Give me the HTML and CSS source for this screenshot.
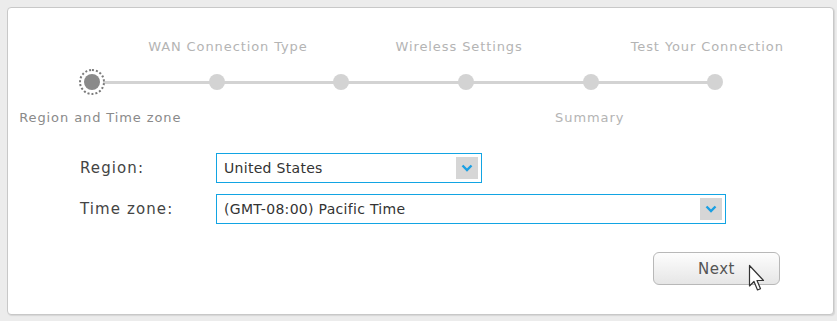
FILE: index.html
```html
<!DOCTYPE html>
<html>
<head>
<meta charset="utf-8">
<link rel="stylesheet" href="styles.css">
</head>
<body>
<div class="card">
  <div class="steps">
    <div class="step">
      <div class="lbl top"></div>
      <div class="dotrow"><span class="dot active"></span></div>
      <div class="lbl bottom current s1">Region and Time zone</div>
    </div>
    <div class="step">
      <div class="lbl top s2">WAN Connection Type</div>
      <div class="dotrow"><span class="dot"></span></div>
      <div class="lbl bottom"></div>
    </div>
    <div class="step">
      <div class="lbl top"></div>
      <div class="dotrow"><span class="dot"></span></div>
      <div class="lbl bottom"></div>
    </div>
    <div class="step">
      <div class="lbl top s4">Wireless Settings</div>
      <div class="dotrow"><span class="dot"></span></div>
      <div class="lbl bottom"></div>
    </div>
    <div class="step">
      <div class="lbl top"></div>
      <div class="dotrow"><span class="dot"></span></div>
      <div class="lbl bottom s5">Summary</div>
    </div>
    <div class="step">
      <div class="lbl top s6">Test Your Connection</div>
      <div class="dotrow"><span class="dot"></span></div>
      <div class="lbl bottom"></div>
    </div>
  </div>

  <div class="form">
    <div class="row">
      <label class="flabel">Region:</label>
      <div class="select region">
        <span class="value">United States</span>
        <span class="arrow"><svg width="12" height="8" viewBox="0 0 12 8"><path d="M1.5 1.5 L6 6 L10.5 1.5" fill="none" stroke="#1a9fe3" stroke-width="2.4"/></svg></span>
      </div>
    </div>
    <div class="row">
      <label class="flabel">Time zone:</label>
      <div class="select tz">
        <span class="value">(GMT-08:00) Pacific Time</span>
        <span class="arrow"><svg width="12" height="8" viewBox="0 0 12 8"><path d="M1.5 1.5 L6 6 L10.5 1.5" fill="none" stroke="#1a9fe3" stroke-width="2.4"/></svg></span>
      </div>
    </div>
  </div>

  <div class="actions">
    <button class="btn">Next</button>
    <svg class="cursor" width="20" height="30" viewBox="0 0 20 30"><path d="M1.5 1.5 L1.5 22 L6 17.5 L9.5 26 L12.5 24.7 L9 16.5 L15.5 16.5 Z" fill="#fff" stroke="#333" stroke-width="1.2" stroke-linejoin="round"/></svg>
  </div>
</div>
</body>
</html>
```
FILE: styles.css
```css
html, body { margin: 0; padding: 0; }
body {
  background: #ececec;
  padding: 7px 0 0 7px;
  font-family: "DejaVu Sans", Verdana, sans-serif;
  width: 837px;
  height: 321px;
  box-sizing: border-box;
  overflow: hidden;
}
.card {
  position: relative;
  width: 827px;
  height: 308px;
  box-sizing: border-box;
  background: #fff;
  border: 1px solid #c8c8c8;
  border-radius: 4px;
  box-shadow: 1px 1px 1px #d6d6d6;
  padding: 30px 0 0 22px;
}
.steps {
  display: grid;
  grid-template-columns: repeat(6, 124.6px);
  position: relative;
}
.steps::before {
  content: "";
  position: absolute;
  left: 62px;
  width: 623px;
  top: 43px;
  height: 3px;
  background: #d3d3d3;
}
.step {
  display: flex;
  flex-direction: column;
  align-items: center;
}
.lbl {
  height: 18px;
  line-height: 18px;
  font-size: 13px;
  letter-spacing: 0.9px;
  color: #b4b4b4;
  white-space: nowrap;
  position: relative;
}
.lbl.current { color: #8a8a8a; }
.lbl.s1 { left: 8px; }
.lbl.s2 { left: 11px; }
.lbl.s4 { left: -7px; }
.lbl.s5 { left: -1px; }
.lbl.s6 { left: -8px; }
.dotrow {
  height: 28px;
  margin: 12px 0 13px;
  display: flex;
  align-items: center;
  justify-content: center;
  position: relative;
  z-index: 1;
}
.dot {
  width: 16px;
  height: 16px;
  border-radius: 50%;
  background: #d3d3d3;
  display: block;
}
.dot.active {
  background: #8a8a8a;
  box-shadow: 0 0 0 3px #fff;
  outline: 2px dotted #7a7a7a;
  outline-offset: 3px;
  border-radius: 50%;
}
.form {
  margin-top: 26px;
  padding-left: 50px;
  display: flex;
  flex-direction: column;
  gap: 11px;
}
.row {
  display: flex;
  align-items: center;
}
.flabel {
  width: 136px;
  font-size: 15px;
  letter-spacing: 1.1px;
  color: #444;
}
.select {
  height: 30px;
  box-sizing: border-box;
  border: 1px solid #12a4e3;
  display: flex;
  align-items: center;
  justify-content: space-between;
  padding: 0 3px 0 7px;
}
.select.region { width: 266px; }
.select.tz { width: 510px; }
.value {
  font-size: 14px;
  letter-spacing: 0.3px;
  color: #333;
}
.arrow {
  width: 22px;
  height: 22px;
  background: #d6d6d6;
  display: flex;
  align-items: center;
  justify-content: center;
}
.actions {
  margin-top: 28px;
  display: flex;
  justify-content: flex-end;
  padding-right: 53px;
  position: relative;
}
.btn {
  width: 127px;
  height: 33px;
  border: 1px solid #b8b8b8;
  border-radius: 6px;
  background: linear-gradient(#fdfdfd, #e6e6e6);
  font-family: "DejaVu Sans", Verdana, sans-serif;
  font-size: 15px;
  letter-spacing: 0.5px;
  color: #555;
  padding: 0;
}
.cursor {
  position: absolute;
  left: 718px;
  top: 12px;
}
```
